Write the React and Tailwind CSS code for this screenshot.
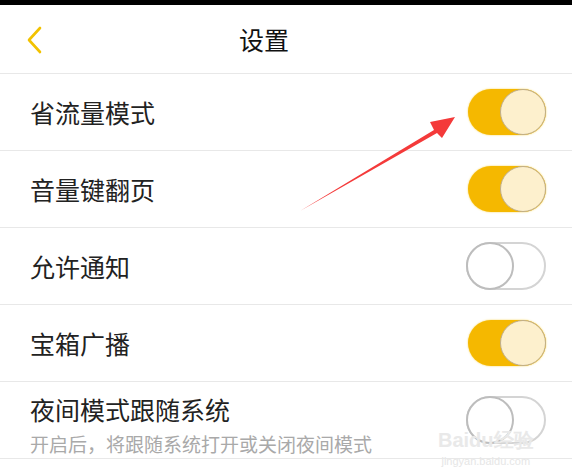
import React from 'react';

const rows = [
    { title: '省流量模式', on: true },
    { title: '音量键翻页', on: true },
    { title: '允许通知', on: false },
    { title: '宝箱广播', on: true },
    { title: '夜间模式跟随系统', sub: '开启后，将跟随系统打开或关闭夜间模式', on: false },
];

function Toggle({ on }) {
    return (
        <div
            className={
                on
                    ? 'relative w-[78px] h-[46px] rounded-full bg-[#f5b800] shadow-[0_0_2px_#f7d24a]'
                    : 'relative w-[80px] h-[48px] rounded-full bg-white border-2 border-[#d4d4d4]'
            }
        >
            {on ? (
                <div className="absolute right-0 top-0 w-[46px] h-[46px] rounded-full bg-[#fdf0cd] border-[1.5px] border-[#bfae8c]" />
            ) : (
                <div className="absolute left-[-2px] top-[-2px] w-[48px] h-[48px] rounded-full bg-white border-2 border-[#bdbdbd]" />
            )}
        </div>
    );
}

export default function App() {
    return (
        <div className="relative w-[572px] h-[476px] bg-white overflow-hidden" style={{ fontFamily: '"Noto Sans CJK SC", "Noto Sans", sans-serif' }}>
            <div className="h-[5px] bg-black" />
            {/* header */}
            <div className="relative flex items-center justify-center h-[69px] pr-[44px] border-b border-[#e8e8e8]">
                <svg className="absolute left-[24px] top-[20px]" width="20" height="30" viewBox="0 0 20 30">
                    <path d="M16 3 L5 15 L16 27" fill="none" stroke="#f2c200" strokeWidth="2.6" strokeLinecap="round" strokeLinejoin="round" />
                </svg>
                <span className="text-[25px] text-[#111] leading-none">设置</span>
            </div>

            {rows.map((r) => (
                <div key={r.title} className="flex items-center justify-between h-[77px] pl-[30px] pr-[26px] border-b border-[#e8e8e8]">
                    <div className={r.sub ? 'flex flex-col pt-[10px]' : 'flex flex-col'}>
                        <span className="text-[25px] text-[#222] leading-none">{r.title}</span>
                        {r.sub && <span className="text-[19px] text-[#a9a9a9] leading-none mt-[12px]">{r.sub}</span>}
                    </div>
                    <Toggle on={r.on} />
                </div>
            ))}

            {/* red arrow annotation */}
            <svg className="absolute left-0 top-0 pointer-events-none" width="572" height="476">
                <path d="M300 211 L434 130 L430 122 L455 117 L442 138 L437 133 Z" fill="#f43a3a" />
            </svg>

            {/* watermark */}
            <div className="absolute left-[438px] top-[430px] flex flex-col items-center text-[#e9e9e9] leading-none" style={{ fontFamily: '"Liberation Sans", sans-serif' }}>
                <span className="text-[20px] font-bold">Baidu经验</span>
                <span className="text-[11px] mt-[6px] text-[#e6e6e6]">jingyan.baidu.com</span>
            </div>
        </div>
    );
}
